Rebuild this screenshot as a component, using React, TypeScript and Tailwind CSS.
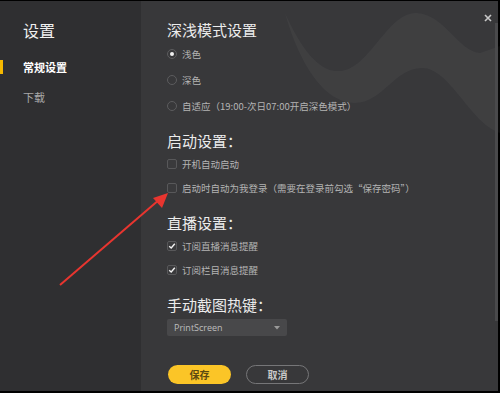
import React from "react";

const font = { fontFamily: '"Noto Sans CJK SC", "Noto Sans", sans-serif' };

function Radio({ checked, label }: { checked?: boolean; label: string }) {
  return (
    <div className="flex h-[26px] items-center gap-[5px]">
      <div className="flex h-[10px] w-[10px] items-center justify-center rounded-full border border-[#5c5c5e]">
        {checked && <div className="h-[4px] w-[4px] rounded-full bg-[#f0f0f0]" />}
      </div>
      <span className="text-[9.5px] text-[#b4b4b4]">{label}</span>
    </div>
  );
}

function Check({ checked, label }: { checked?: boolean; label: string }) {
  return (
    <div className="flex h-[24px] items-center gap-[5px]">
      <div className="flex h-[10px] w-[10px] items-center justify-center rounded-[2px] border border-[#58585a] bg-[#3a3a3c]">
        {checked && (
          <svg width="8" height="8" viewBox="0 0 8 8">
            <path d="M1.2 4.2 L3.2 6 L6.8 1.8" fill="none" stroke="#f2f2f2" strokeWidth="1.4" />
          </svg>
        )}
      </div>
      <span className="text-[9.5px] text-[#b4b4b4]">{label}</span>
    </div>
  );
}

function Heading({ children, className = "" }: { children: React.ReactNode; className?: string }) {
  return (
    <div className={`flex h-[22px] items-center text-[15px] text-[#ececec] ${className}`}>{children}</div>
  );
}

export default function App() {
  return (
    <div
      className="relative flex h-[393px] w-[500px] overflow-hidden border-t border-b-[2px] border-black bg-[#38383a]"
      style={font}
    >
      {/* sidebar */}
      <div className="flex w-[141px] shrink-0 flex-col bg-[#2f2f31]">
        <div className="mt-[18px] pl-[23px] text-[16px] leading-[22px] text-[#f0f0f0]">设置</div>
        <div className="relative mt-[19px] flex h-[14px] items-center pl-[23px] text-[11px] font-bold text-white">
          <div className="absolute left-0 top-0 h-[14px] w-[3px] bg-[#f5b800]" />
          常规设置
        </div>
        <div className="mt-[16px] flex h-[14px] items-center pl-[23px] text-[11px] text-[#a8a8a8]">下载</div>
      </div>

      {/* main */}
      <div className="relative flex-1">
        <svg className="pointer-events-none absolute left-0 top-0" width="359" height="393" viewBox="141 0 359 393">
          <path
            d="M285,12 C300,45 318,72 340,70 C370,68 388,10 417,12 C445,14 458,50 480,52 L500,45 L500,132 C470,122 450,67 422,67 C395,67 382,102 355,102 C320,102 296,52 285,12 Z"
            fill="#ffffff"
            fillOpacity="0.035"
          />
        </svg>

        <div className="relative flex flex-col pl-[26px] pt-[18px]">
          <Heading>深浅模式设置</Heading>
          <Radio checked label="浅色" />
          <Radio label="深色" />
          <Radio label="自适应（19:00-次日07:00开启深色模式）" />

          <Heading className="mt-[11px]">启动设置：</Heading>
          <Check label="开机自动启动" />
          <Check label="启动时自动为我登录（需要在登录前勾选“保存密码”）" />

          <Heading className="mt-[12px]">直播设置：</Heading>
          <Check checked label="订阅直播消息提醒" />
          <Check checked label="订阅栏目消息提醒" />

          <Heading className="mt-[12px]">手动截图热键：</Heading>
          <div className="mt-[3px] flex h-[17px] w-[120px] items-center justify-between rounded-[2px] bg-[#48484a] pl-[7px] pr-[7px]">
            <span className="text-[9px] text-[#bdbdbd]" style={{ fontFamily: '"Open Sans", "Noto Sans", sans-serif' }}>
              PrintScreen
            </span>
            <svg width="6" height="4" viewBox="0 0 6 4">
              <path d="M0 0 L6 0 L3 3.5 Z" fill="#9a9a9a" />
            </svg>
          </div>

          <div className="mt-[29px] flex gap-[15px] pl-[1px]">
            <div className="flex h-[19px] w-[63px] items-center justify-center rounded-full bg-[#fbc527] text-[10px] font-bold text-[#5b4a12]">
              保存
            </div>
            <div className="flex h-[19px] w-[63px] items-center justify-center rounded-full border border-[#767678] text-[10px] font-bold text-[#c8c8c8]">
              取消
            </div>
          </div>
        </div>

        {/* close */}
        <svg className="absolute left-[343px] top-[13px]" width="8" height="8" viewBox="0 0 8 8">
          <path d="M1 1 L7 7 M7 1 L1 7" stroke="#c8c8c8" strokeWidth="1.6" />
        </svg>
        {/* scrollbar */}
        <div className="absolute left-[354px] top-[22px] h-[298px] w-[3px] bg-[#4a4a4c]" />
      </div>
      <div className="w-[2px] shrink-0 bg-black" />

      {/* red arrow annotation */}
      <svg className="pointer-events-none absolute left-0 top-0" width="500" height="393" viewBox="0 0 500 393">
        <line x1="60" y1="284" x2="160" y2="198" stroke="#e8352f" strokeWidth="2" />
        <path d="M168,192 L153,197 L162,207 Z" fill="#e8352f" />
      </svg>
    </div>
  );
}
